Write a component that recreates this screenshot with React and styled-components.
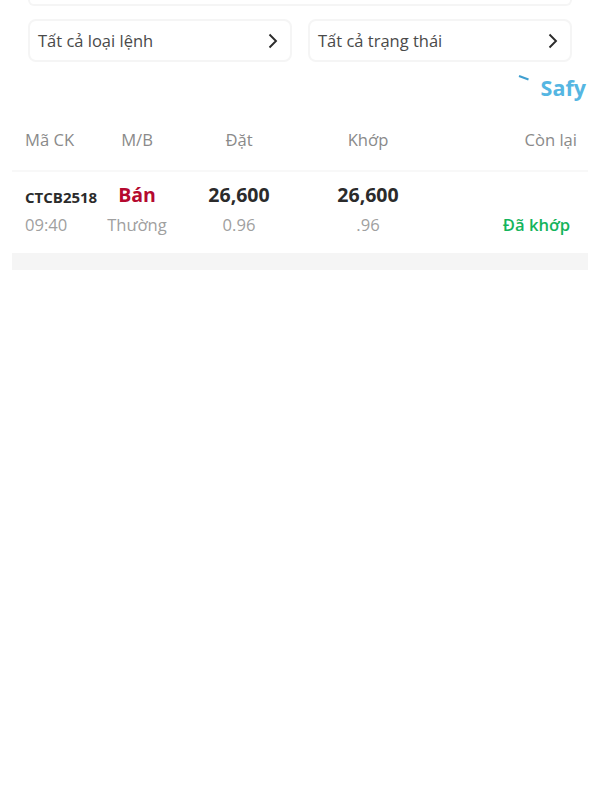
import styled, { createGlobalStyle } from "styled-components";

const GlobalStyle = createGlobalStyle`
  html, body {
    margin: 0;
    padding: 0;
    background: #fff;
    font-family: "Open Sans", sans-serif;
  }
`;

const COLUMNS = "75px 74px 130px 128px 1fr";

function Chevron() {
  return (
    <svg width="12" height="16" viewBox="0 0 12 16" fill="none">
      <path d="M2.5 1.5 L9 8 L2.5 14.5" stroke="#2b2b2b" strokeWidth="1.9" />
    </svg>
  );
}

function App() {
  return (
    <Page>
      <GlobalStyle />
      <TopBox />
      <Filters>
        <Filter>
          <span>Tất cả loại lệnh</span>
          <Chevron />
        </Filter>
        <Filter>
          <span>Tất cả trạng thái</span>
          <Chevron />
        </Filter>
      </Filters>
      <BrandRow>
        <BrandTick width="12" height="6" viewBox="0 0 12 6" fill="none">
          <path d="M1 1 L10.5 4.5" stroke="#3f9fd0" strokeWidth="2" />
        </BrandTick>
        <Brand>Safy</Brand>
      </BrandRow>
      <HeaderRow>
        <HeadCell $align="left">Mã CK</HeadCell>
        <HeadCell>M/B</HeadCell>
        <HeadCell>Đặt</HeadCell>
        <HeadCell>Khớp</HeadCell>
        <HeadCell $align="right">Còn lại</HeadCell>
      </HeaderRow>
      <Card>
        <OrderRow>
          <Symbol>CTCB2518</Symbol>
          <Side>Bán</Side>
          <Price>26,600</Price>
          <Price>26,600</Price>
          <span />
        </OrderRow>
        <OrderRow>
          <SubCell $align="left">09:40</SubCell>
          <SubCell>Thường</SubCell>
          <SubCell>0.96</SubCell>
          <SubCell>.96</SubCell>
          <Status>Đã khớp</Status>
        </OrderRow>
      </Card>
      <Footer />
    </Page>
  );
}

const Page = styled.div`
  width: 600px;
  height: 800px;
  background: #fff;
  overflow: hidden;
  display: flex;
  flex-direction: column;
  box-sizing: border-box;
`;

const TopBox = styled.div`
  height: 6px;
  margin: 0 28px;
  box-sizing: border-box;
  border: 2px solid #f5f5f5;
  border-top: 0;
  border-radius: 0 0 8px 8px;
`;

const Filters = styled.div`
  display: grid;
  grid-template-columns: 264px 264px;
  gap: 16px;
  margin: 13px 28px 0;
`;

const Filter = styled.div`
  height: 43px;
  box-sizing: border-box;
  border: 2px solid #f5f5f5;
  border-radius: 8px;
  padding: 0 11px 0 8px;
  display: flex;
  align-items: center;
  justify-content: space-between;
  font-size: 16.5px;
  color: #4a4a4a;
`;

const BrandRow = styled.div`
  display: flex;
  justify-content: flex-end;
  align-items: flex-start;
  gap: 11px;
  height: 44px;
  padding: 11px 14px 0 0;
  box-sizing: border-box;
`;

const BrandTick = styled.svg`
  margin-top: 2px;
`;

const Brand = styled.span`
  font-size: 21.5px;
  line-height: 29px;
  font-weight: 700;
  color: #55b6e2;
`;

const Grid = styled.div`
  display: grid;
  grid-template-columns: ${COLUMNS};
  align-items: center;
`;

const HeaderRow = styled(Grid)`
  height: 36px;
  margin-top: 15px;
  padding: 0 23px 0 25px;
`;

const HeadCell = styled.div`
  font-size: 16.6px;
  color: #8a8a8a;
  text-align: ${(p) => p.$align || "center"};
  white-space: nowrap;
`;

const Card = styled.div`
  margin: 13px 12px 0;
  height: 83px;
  box-sizing: border-box;
  border-top: 2px solid #f8f8f8;
  padding-top: 6px;
`;

const OrderRow = styled(Grid)`
  height: 32px;
  padding: 0 18px 0 13px;

  & + & {
    height: 28px;
  }
`;

const Symbol = styled.div`
  font-size: 15px;
  font-weight: 700;
  color: #2b2b2b;
  white-space: nowrap;
  padding-top: 5px;
`;

const Side = styled.div`
  font-size: 19.5px;
  font-weight: 700;
  color: #b5092f;
  text-align: center;
`;

const Price = styled.div`
  font-size: 19.5px;
  font-weight: 700;
  color: #2b2b2b;
  text-align: center;
`;

const SubCell = styled.div`
  font-size: 16.6px;
  color: #a0a0a0;
  text-align: ${(p) => p.$align || "center"};
  white-space: nowrap;
`;

const Status = styled.div`
  font-size: 16.6px;
  font-weight: 600;
  color: #14b45c;
  text-align: right;
  white-space: nowrap;
`;

const Footer = styled.div`
  height: 17px;
  margin: 0 12px;
  background: #f5f5f5;
`;

export default App;
